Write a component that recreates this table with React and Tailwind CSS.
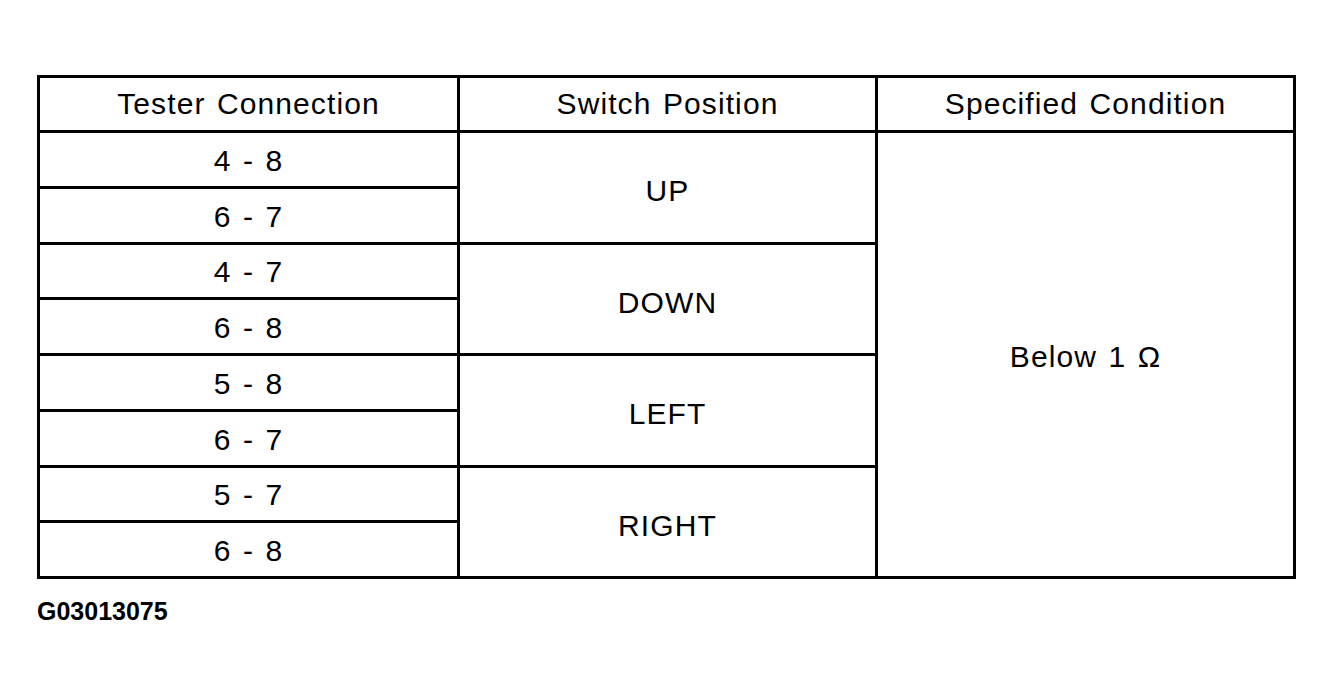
import React from "react";

const rows = [
  ["4 - 8", "6 - 7", "UP"],
  ["4 - 7", "6 - 8", "DOWN"],
  ["5 - 8", "6 - 7", "LEFT"],
  ["5 - 7", "6 - 8", "RIGHT"],
];

const rowStart = [
  ["row-start-2", "row-start-3", "row-start-2 row-span-2"],
  ["row-start-4", "row-start-5", "row-start-4 row-span-2"],
  ["row-start-6", "row-start-7", "row-start-6 row-span-2"],
  ["row-start-8", "row-start-9", "row-start-8 row-span-2"],
];

const cell = "bg-white flex items-center justify-center text-black";

export default function App() {
  return (
    <div
      className="w-[1334px] h-[698px] bg-white pt-[75px] pl-[37px]"
      style={{ fontFamily: '"Liberation Sans", Arial, sans-serif' }}
    >
      <div className="w-[1259px] h-[504px] bg-black p-[3px] grid grid-cols-[417px_415px_415px] grid-rows-[52px_repeat(8,1fr)] gap-[3px] text-[30px] leading-none tracking-[1.1px] [word-spacing:2px]">
        <div className={`${cell} col-start-1 row-start-1`}>Tester Connection</div>
        <div className={`${cell} col-start-2 row-start-1`}>Switch Position</div>
        <div className={`${cell} col-start-3 row-start-1`}>Specified Condition</div>
        {rows.map((r, i) => (
          <React.Fragment key={i}>
            <div className={`${cell} pt-[3px] col-start-1 ${rowStart[i][0]}`}>{r[0]}</div>
            <div className={`${cell} pt-[3px] col-start-1 ${rowStart[i][1]}`}>{r[1]}</div>
            <div className={`${cell} pt-[8px] col-start-2 ${rowStart[i][2]}`}>{r[2]}</div>
          </React.Fragment>
        ))}
        <div className={`${cell} pt-[4px] col-start-3 row-start-2 row-span-8`}>Below 1 Ω</div>
      </div>
      <div className="mt-[20px] text-[25px] font-bold leading-none text-black">G03013075</div>
    </div>
  );
}
